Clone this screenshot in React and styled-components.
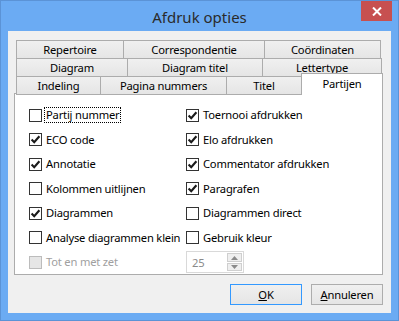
import React from "react";
import styled, { createGlobalStyle } from "styled-components";

/*
  <Window>
    <TitleBar> <Title /> <CloseButton /> </TitleBar>
    <Client>
      <TabStrip> <TabRow> <Tab /> </TabRow> </TabStrip>
      <Panel> <OptionGrid> <Option /> </OptionGrid> </Panel>
      <ButtonRow> <DialogButton /> </ButtonRow>
    </Client>
  </Window>
 */

const GlobalStyle = createGlobalStyle`
  html, body {
    margin: 0;
    padding: 0;
    background: #ffffff;
  }
  * {
    box-sizing: border-box;
  }
`;

const Window = styled.div`
  display: flex;
  flex-direction: column;
  width: 399px;
  height: 321px;
  background-color: #6babf3;
  border: 1px solid #5b93d6;
  padding: 0 7px 7px 7px;
  font-family: "Noto Sans", "DejaVu Sans", sans-serif;
  font-size: 11.2px;
  letter-spacing: -0.2px;
  color: #000;
`;

const TitleBar = styled.div`
  position: relative;
  height: 30px;
  display: flex;
  align-items: center;
  justify-content: center;
`;

const Title = styled.div`
  font-size: 15px;
  letter-spacing: 0;
  color: #2a2a2a;
  margin-top: 1px;
`;

const CloseButton = styled.div`
  position: absolute;
  top: 0;
  right: -1px;
  width: 31px;
  height: 20px;
  background-color: #c75050;
  display: flex;
  align-items: center;
  justify-content: center;
`;

const Client = styled.div`
  flex: 1;
  display: flex;
  flex-direction: column;
  background-color: #f0f0f0;
  padding: 9px 8px 0 6px;
`;

const TabStrip = styled.div`
  display: flex;
  flex-direction: column;
  padding-left: 2px;
  margin-bottom: -2px;
`;

const TabRow = styled.div`
  display: flex;
  & + & {
    margin-top: -1px;
  }
`;

const Tab = styled.div`
  width: ${(p) => p.$w}px;
  height: ${(p) => (p.$active ? 22 : 19)}px;
  margin-top: ${(p) => (p.$active ? -3 : 0)}px;
  display: flex;
  align-items: ${(p) => (p.$active ? "flex-start" : "center")};
  padding-top: ${(p) => (p.$active ? 2 : 0)}px;
  justify-content: center;
  border: 1px solid #acacac;
  border-bottom: ${(p) => (p.$active ? "none" : "1px solid #acacac")};
  background: ${(p) =>
    p.$active ? "#ffffff" : "linear-gradient(#f0f0f0, #e5e5e5)"};
  position: ${(p) => (p.$active ? "relative" : "static")};
  z-index: ${(p) => (p.$active ? 1 : 0)};
  white-space: nowrap;

  & + & {
    margin-left: -1px;
  }
`;

const Panel = styled.div`
  height: 182px;
  background-color: #ffffff;
  border: 1px solid #acacac;
  padding: 9px 0 0 14px;
`;

const OptionGrid = styled.div`
  display: grid;
  grid-template-columns: 157px 1fr;
  grid-auto-rows: 24.5px;
`;

const Option = styled.div`
  display: flex;
  align-items: center;
  gap: 3px;
  color: ${(p) => (p.$disabled ? "#a0a0a0" : "#000")};
  white-space: nowrap;
`;

const Box = styled.span`
  width: 13px;
  height: 13px;
  flex: none;
  border: 1px solid ${(p) => (p.$disabled ? "#bcbcbc" : "#333333")};
  background-color: ${(p) => (p.$disabled ? "#e6e6e6" : "#ffffff")};
  display: flex;
  align-items: center;
  justify-content: center;
`;

const Label = styled.span`
  padding: 0 1px;
  margin-left: -1px;
  line-height: 14px;
  border: 1px dotted ${(p) => (p.$focus ? "#000" : "transparent")};
`;

const SpinBox = styled.div`
  width: 58px;
  height: 22px;
  display: flex;
  align-items: stretch;
  border: 1px solid #d9d9d9;
  background-color: #ffffff;
`;

const SpinValue = styled.div`
  flex: 1;
  display: flex;
  align-items: center;
  padding-left: 5px;
  color: #8a8a8a;
`;

const SpinButtons = styled.div`
  width: 16px;
  display: flex;
  flex-direction: column;
  gap: 1px;
  padding: 1px 1px 1px 0;
`;

const SpinButton = styled.div`
  flex: 1;
  display: flex;
  align-items: center;
  justify-content: center;
  border: 1px solid #cfcfcf;
  background: #efefef;
`;

const ButtonRow = styled.div`
  display: flex;
  justify-content: flex-end;
  gap: 9px;
  margin-top: 9px;
`;

const DialogButton = styled.div`
  width: 72px;
  height: 21px;
  display: flex;
  align-items: center;
  justify-content: center;
  border: 1px solid ${(p) => (p.$default ? "#3399ff" : "#adadad")};
  background: linear-gradient(#f0f0f0, #e5e5e5);
  color: #000;
`;

const Check = () => (
  <svg width="11" height="11" viewBox="0 0 11 11">
    <path
      d="M1.6 5.6 L4.2 8.3 L9.4 2.2"
      stroke="#1a1a1a"
      strokeWidth="2.1"
      fill="none"
      strokeLinejoin="miter"
    />
  </svg>
);

const Arrow = ({ up }) => (
  <svg width="7" height="4" viewBox="0 0 7 4">
    <path d={up ? "M0 4 L3.5 0 L7 4 Z" : "M0 0 L3.5 4 L7 0 Z"} fill="#8a8a8a" />
  </svg>
);

const tabRows = [
  [
    { label: "Repertoire", w: 108 },
    { label: "Correspondentie", w: 142 },
    { label: "Coördinaten", w: 117 },
  ],
  [
    { label: "Diagram", w: 112 },
    { label: "Diagram titel", w: 136 },
    { label: "Lettertype", w: 120 },
  ],
  [
    { label: "Indeling", w: 85 },
    { label: "Pagina nummers", w: 127 },
    { label: "Titel", w: 76 },
    { label: "Partijen", w: 82, active: true },
  ],
];

const options = [
  { label: "Partij nummer", checked: false, focus: true },
  { label: "Toernooi afdrukken", checked: true },
  { label: "ECO code", checked: true },
  { label: "Elo afdrukken", checked: true },
  { label: "Annotatie", checked: true },
  { label: "Commentator afdrukken", checked: true },
  { label: "Kolommen uitlijnen", checked: false },
  { label: "Paragrafen", checked: true },
  { label: "Diagrammen", checked: true },
  { label: "Diagrammen direct", checked: false },
  { label: "Analyse diagrammen klein", checked: false },
  { label: "Gebruik kleur", checked: false },
  { label: "Tot en met zet", checked: false, disabled: true },
];

export default function App() {
  return (
    <>
      <GlobalStyle />
      <Window>
        <TitleBar>
          <Title>Afdruk opties</Title>
          <CloseButton>
            <svg width="10" height="9" viewBox="0 0 10 9">
              <path d="M1 0.5 L9 8.5 M9 0.5 L1 8.5" stroke="#fff" strokeWidth="2" />
            </svg>
          </CloseButton>
        </TitleBar>
        <Client>
          <TabStrip>
            {tabRows.map((row, i) => (
              <TabRow key={i}>
                {row.map((t) => (
                  <Tab key={t.label} $w={t.w} $active={t.active}>
                    {t.label}
                  </Tab>
                ))}
              </TabRow>
            ))}
          </TabStrip>
          <Panel>
            <OptionGrid>
              {options.map((o) => (
                <Option key={o.label} $disabled={o.disabled}>
                  <Box $disabled={o.disabled}>{o.checked && <Check />}</Box>
                  <Label $focus={o.focus}>{o.label}</Label>
                </Option>
              ))}
              <Option>
                <SpinBox>
                  <SpinValue>25</SpinValue>
                  <SpinButtons>
                    <SpinButton>
                      <Arrow up />
                    </SpinButton>
                    <SpinButton>
                      <Arrow />
                    </SpinButton>
                  </SpinButtons>
                </SpinBox>
              </Option>
            </OptionGrid>
          </Panel>
          <ButtonRow>
            <DialogButton $default>
              <span>
                <u>O</u>K
              </span>
            </DialogButton>
            <DialogButton>
              <span>
                <u>A</u>nnuleren
              </span>
            </DialogButton>
          </ButtonRow>
        </Client>
      </Window>
    </>
  );
}
